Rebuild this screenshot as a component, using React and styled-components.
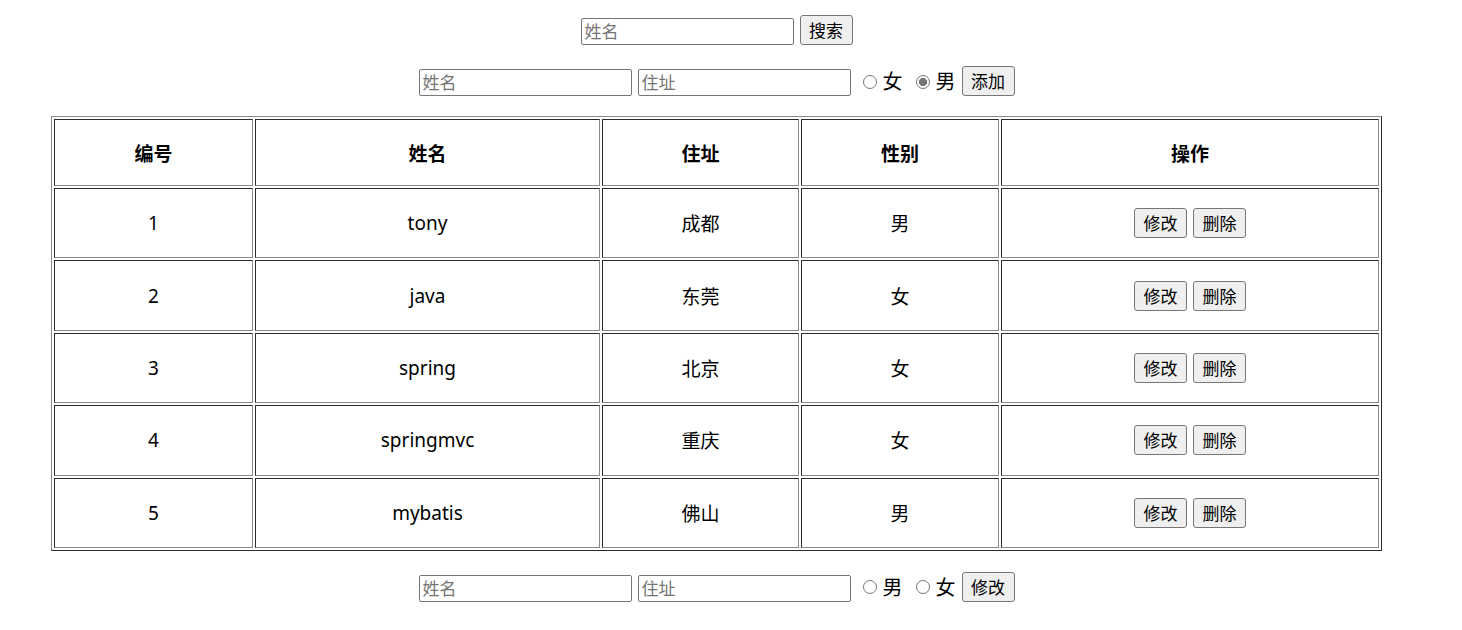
import React from 'react';
import styled, { createGlobalStyle } from 'styled-components';

const GlobalStyle = createGlobalStyle`
  body {
    margin: 0;
    background: #fff;
    font-family: "Noto Sans", "Noto Sans CJK SC", sans-serif;
    color: #000;
  }
`;

const Page = styled.div`
  width: 1433px;
  display: flex;
  flex-direction: column;
  align-items: center;
  padding-top: 15px;
`;

const FormRow = styled.div`
  display: flex;
  align-items: flex-end;
  gap: 6px;
  margin-bottom: ${(p) => p.mb || 0}px;
  height: 30px;
`;

const TextInput = styled.input`
  box-sizing: border-box;
  width: 213px;
  height: 27px;
  margin: 0;
  padding: 0 3px 2px;
  border: 1px solid #767676;
  border-radius: 2px;
  font-family: "Noto Sans CJK SC", sans-serif;
  font-size: 17px;
  outline: none;
  &::placeholder {
    color: #757575;
  }
`;

const Button = styled.button`
  box-sizing: border-box;
  height: 30px;
  min-width: 53px;
  margin: 0;
  padding: 0 7px;
  background: #efefef;
  border: 1px solid #767676;
  border-radius: 3px;
  font-family: "Noto Sans CJK SC", sans-serif;
  font-size: 17px;
  color: #000;
  line-height: 26px;
`;

const RadioGroup = styled.div`
  display: flex;
  align-items: center;
  height: 30px;
  margin-left: 6px;
`;

const RadioLabel = styled.label`
  display: flex;
  align-items: center;
  font-family: "Noto Sans CJK SC", sans-serif;
  font-size: 20px;
  line-height: 30px;
  margin-right: ${(p) => p.mr || 0}px;
`;

const Radio = styled.input`
  appearance: none;
  -webkit-appearance: none;
  box-sizing: border-box;
  flex: 0 0 14px;
  width: 14px;
  min-width: 14px;
  height: 14px;
  padding: 0;
  margin: 1px 6px 0 0;
  border: 1px solid #767676;
  border-radius: 50%;
  background: #fff;
  &:checked {
    background: radial-gradient(circle, #767676 0 3.8px, #fff 4.4px);
  }
`;

const Table = styled.table`
  box-sizing: border-box;
  width: 1331px;
  table-layout: fixed;
  border-collapse: separate;
  border-spacing: 2px;
  border: 1px solid;
  border-color: #8a8a8a #2b2b2b #2b2b2b #8a8a8a;
  margin-bottom: 21px;
  font-size: 19px;
`;

const Cell = styled.td`
  box-sizing: border-box;
  height: ${(p) => (p.head ? 67 : 70.4)}px;
  padding: 1px;
  text-align: center;
  vertical-align: middle;
  border: 1px solid;
  border-color: #2b2b2b #8a8a8a #8a8a8a #2b2b2b;
  font-weight: ${(p) => (p.head ? 700 : 400)};
`;

const Actions = styled.div`
  display: flex;
  justify-content: center;
  gap: 6px;
`;

const widths = [199, 345, 197, 198, 378];

const rows = [
  { id: 1, name: 'tony', addr: '成都', sex: '男' },
  { id: 2, name: 'java', addr: '东莞', sex: '女' },
  { id: 3, name: 'spring', addr: '北京', sex: '女' },
  { id: 4, name: 'springmvc', addr: '重庆', sex: '女' },
  { id: 5, name: 'mybatis', addr: '佛山', sex: '男' },
];

export default function App() {
  return (
    <Page>
      <GlobalStyle />
      <FormRow mb={21}>
        <TextInput placeholder="姓名" />
        <Button>搜索</Button>
      </FormRow>

      <FormRow mb={20}>
        <TextInput placeholder="姓名" />
        <TextInput placeholder="住址" />
        <RadioGroup>
          <RadioLabel mr={13}>
            <Radio type="radio" name="addSex" />女
          </RadioLabel>
          <RadioLabel mr={0}>
            <Radio type="radio" name="addSex" defaultChecked />男
          </RadioLabel>
        </RadioGroup>
        <Button>添加</Button>
      </FormRow>

      <Table>
        <colgroup>
          {widths.map((w, i) => (
            <col key={i} style={{ width: w }} />
          ))}
        </colgroup>
        <thead>
          <tr>
            <Cell as="th" head>编号</Cell>
            <Cell as="th" head>姓名</Cell>
            <Cell as="th" head>住址</Cell>
            <Cell as="th" head>性别</Cell>
            <Cell as="th" head>操作</Cell>
          </tr>
        </thead>
        <tbody>
          {rows.map((r) => (
            <tr key={r.id}>
              <Cell>{r.id}</Cell>
              <Cell>{r.name}</Cell>
              <Cell>{r.addr}</Cell>
              <Cell>{r.sex}</Cell>
              <Cell>
                <Actions>
                  <Button>修改</Button>
                  <Button>删除</Button>
                </Actions>
              </Cell>
            </tr>
          ))}
        </tbody>
      </Table>

      <FormRow>
        <TextInput placeholder="姓名" />
        <TextInput placeholder="住址" />
        <RadioGroup>
          <RadioLabel mr={13}>
            <Radio type="radio" name="editSex" />男
          </RadioLabel>
          <RadioLabel mr={0}>
            <Radio type="radio" name="editSex" />女
          </RadioLabel>
        </RadioGroup>
        <Button>修改</Button>
      </FormRow>
    </Page>
  );
}
